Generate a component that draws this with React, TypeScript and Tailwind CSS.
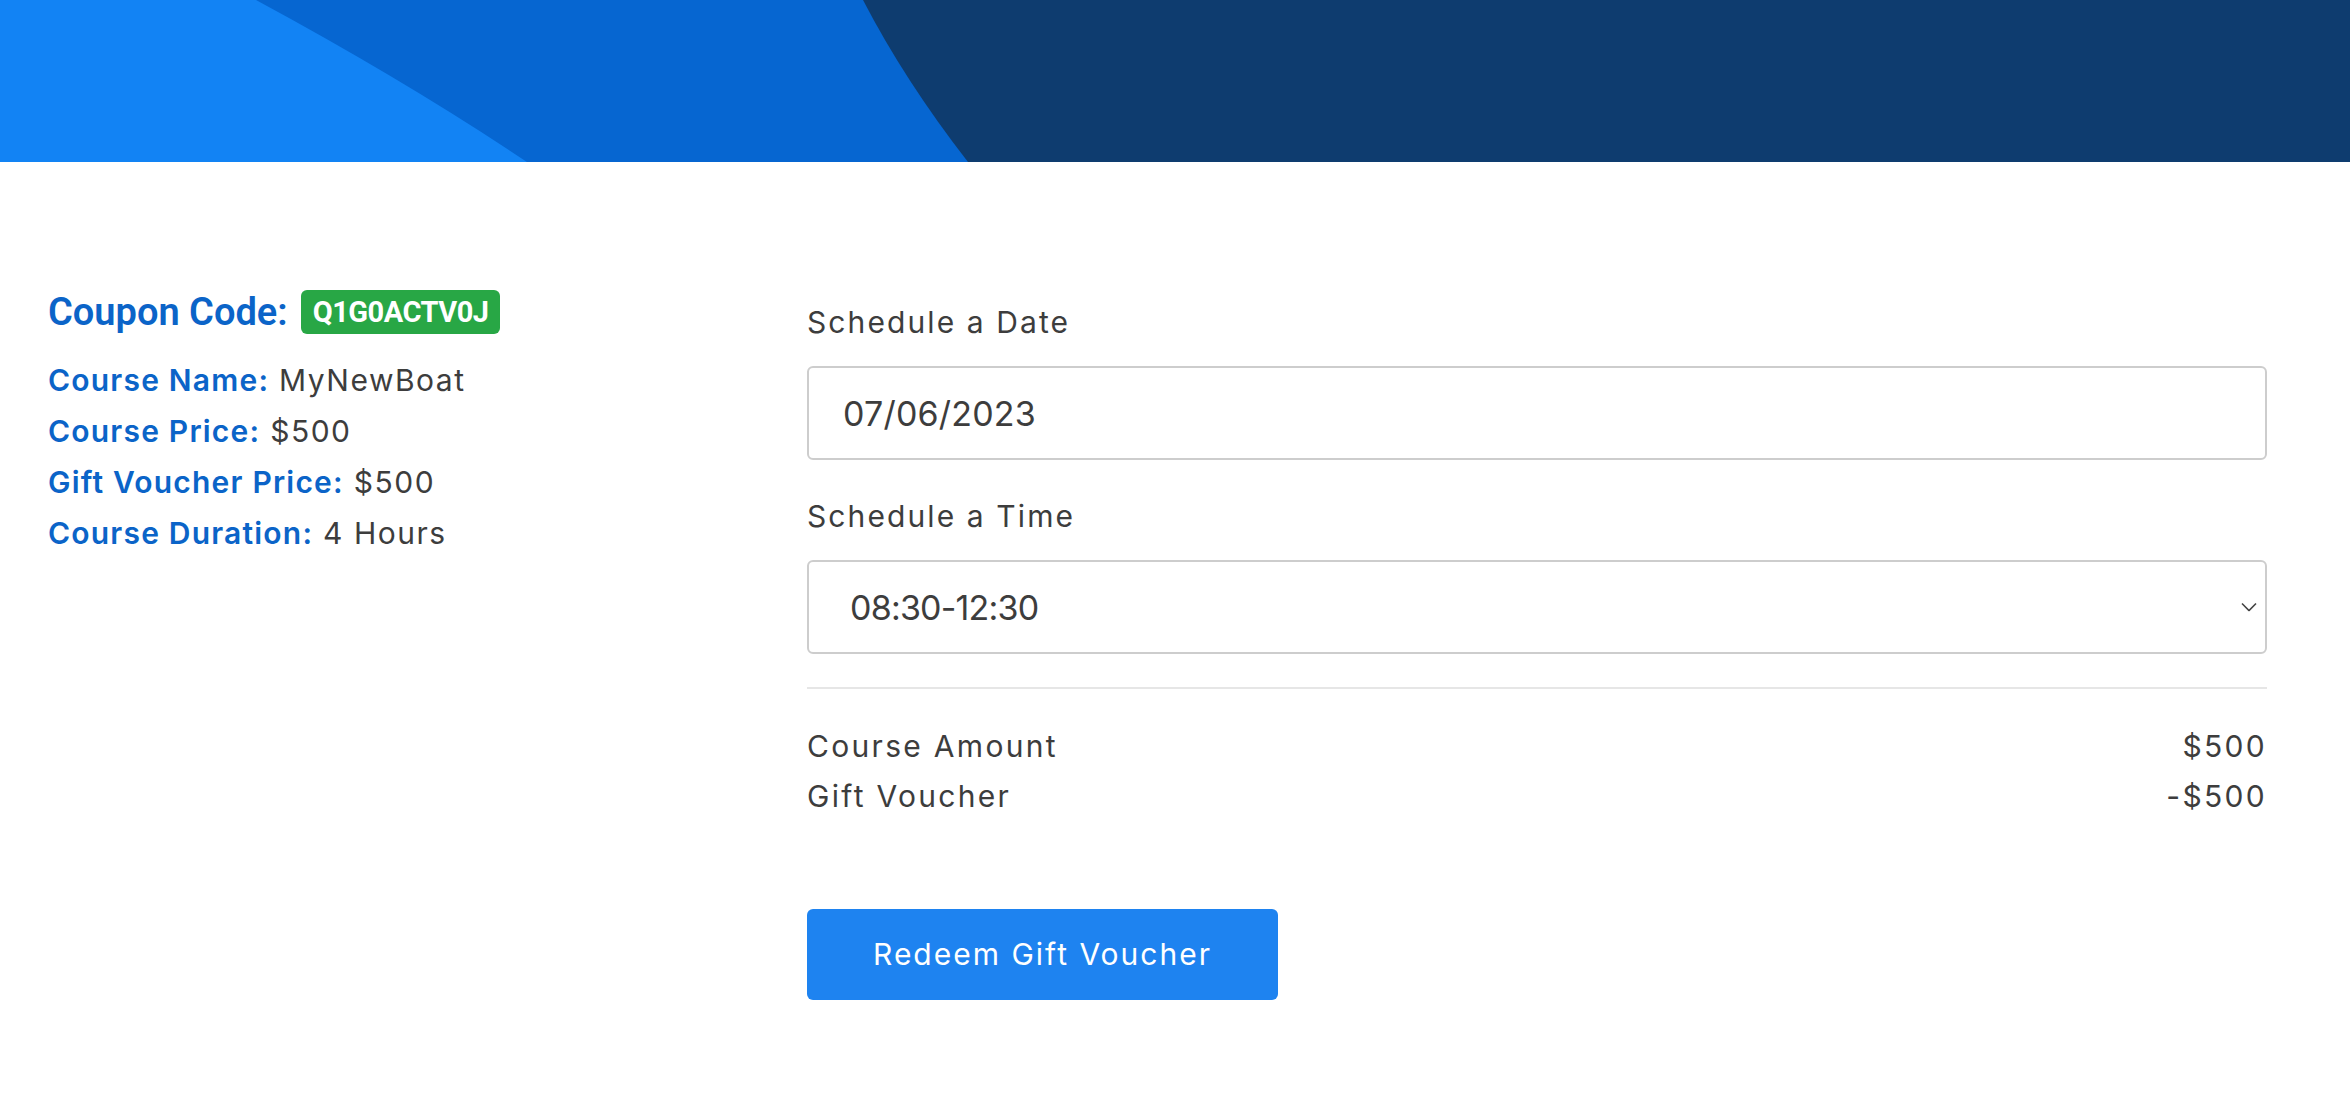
import { useState } from 'react';

const details = [
  { label: 'Course Name:', value: 'MyNewBoat' },
  { label: 'Course Price:', value: '$500' },
  { label: 'Gift Voucher Price:', value: '$500' },
  { label: 'Course Duration:', value: '4 Hours' },
];

function HeaderBanner() {
  return (
    <svg
      viewBox="0 0 2350 162"
      preserveAspectRatio="none"
      className="block h-[162px] w-full"
    >
      <rect width="2350" height="162" fill="#1283f4" />
      <path d="M256 0 Q406 81 527 162 L2350 162 L2350 0 Z" fill="#0666d1" />
      <path d="M863 0 Q905 81 968 162 L2350 162 L2350 0 Z" fill="#0e3c6f" />
    </svg>
  );
}

export default function App() {
  const [date, setDate] = useState('07/06/2023');
  const [time, setTime] = useState('08:30-12:30');

  return (
    <div className="min-h-screen bg-white font-[Inter,sans-serif] text-[#3d3d3d]">
      <HeaderBanner />

      <div className="flex pl-[48px] pr-[83px] pt-[128px]">
        {/* course summary */}
        <div className="w-[759px] shrink-0">
          <div className="flex items-center gap-[13px]">
            <h4 className="font-[Roboto,sans-serif] text-[38px] font-semibold leading-[44px] text-[#0b64c8]">
              Coupon Code:
            </h4>
            <span className="rounded-[6px] bg-[#28a745] px-[12px] font-[Roboto,sans-serif] text-[29px] font-bold leading-[44px] tracking-[-0.5px] text-white">
              Q1G0ACTV0J
            </span>
          </div>
          <ul className="mt-[21px]">
            {details.map(d => (
              <li key={d.label} className="text-[30px] leading-[51px] tracking-[1.5px]">
                <span className="font-semibold tracking-[1.2px] text-[#0b64c8]">{d.label}</span>{' '}
                <span>{d.value}</span>
              </li>
            ))}
          </ul>
        </div>

        {/* booking form */}
        <div className="flex-1 pt-[10px]">
          <label className="block text-[30px] leading-[45px] tracking-[2.1px]">Schedule a Date</label>
          <input
            type="text"
            value={date}
            onChange={e => setDate(e.target.value)}
            className="mt-[21px] block h-[94px] w-full rounded-[6px] border-2 border-[#cdcdcd] px-[34px] text-[34px] tracking-[0.2px] text-[#3d3d3d] outline-none"
          />

          <label className="mt-[34px] block text-[30px] leading-[45px] tracking-[2.1px]">Schedule a Time</label>
          <div className="relative mt-[21px]">
            <select
              value={time}
              onChange={e => setTime(e.target.value)}
              className="block h-[94px] w-full appearance-none rounded-[6px] border-2 border-[#cdcdcd] bg-white px-[41px] text-[34px] tracking-[-0.8px] text-[#3d3d3d] outline-none"
            >
              <option>08:30-12:30</option>
              <option>13:00-17:00</option>
            </select>
            <svg
              viewBox="0 0 16 9"
              className="pointer-events-none absolute right-[10px] top-1/2 h-[9px] w-[16px] -translate-y-1/2"
              fill="none"
              stroke="#444"
              strokeWidth="1.6"
            >
              <polyline points="1,1 8,8 15,1" />
            </svg>
          </div>

          <hr className="mt-[33px] border-t-2 border-[#e6e6e6]" />

          <div className="mt-[32px] text-[30px] leading-[50px] tracking-[2.3px]">
            <div className="flex justify-between">
              <span>Course Amount</span>
              <span>$500</span>
            </div>
            <div className="flex justify-between">
              <span>Gift Voucher</span>
              <span>-$500</span>
            </div>
          </div>

          <button className="mt-[88px] h-[91px] w-[471px] rounded-[6px] bg-[#1e83f0] text-[30px] tracking-[2px] text-white">
            Redeem Gift Voucher
          </button>
        </div>
      </div>
    </div>
  );
}
